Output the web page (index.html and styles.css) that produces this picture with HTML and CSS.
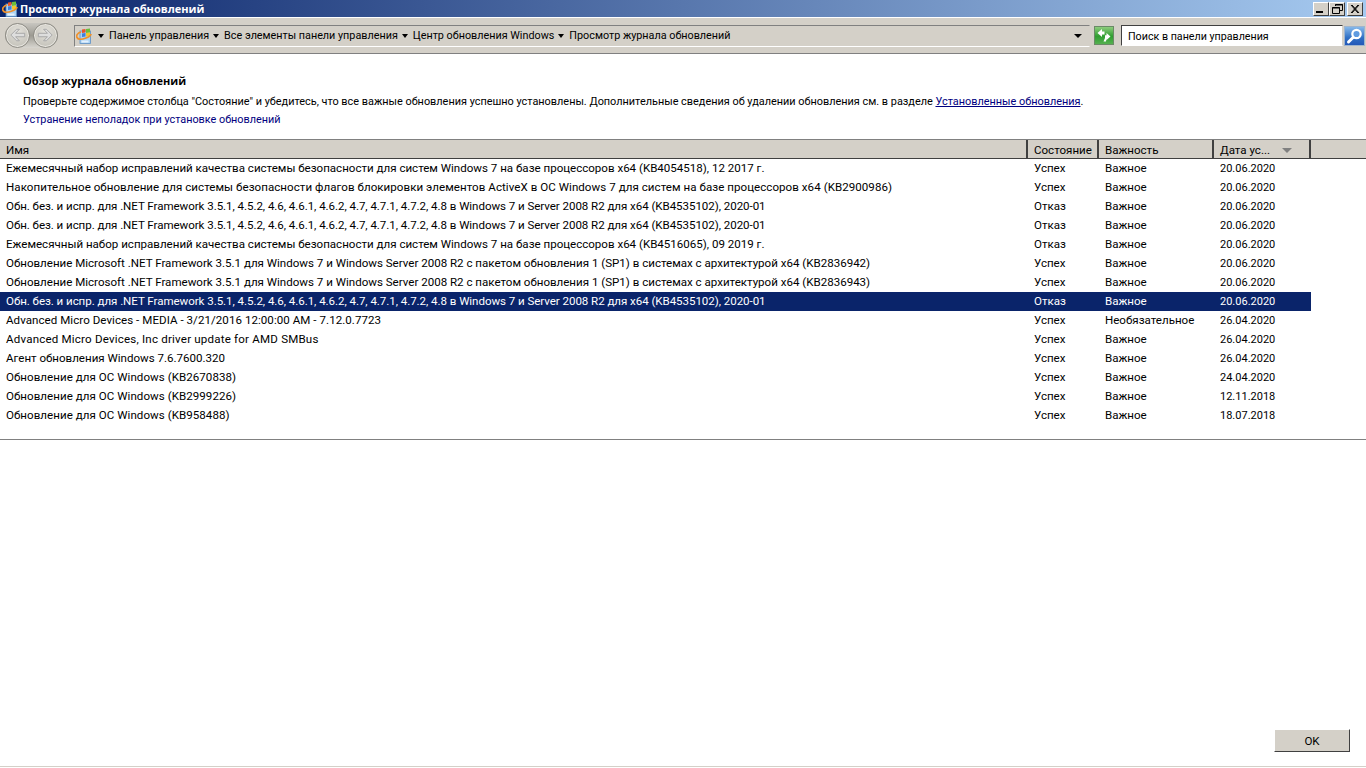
FILE: index.html
```html
<!DOCTYPE html>
<html lang="ru">
<head>
<meta charset="utf-8">
<title>Просмотр журнала обновлений</title>
<link rel="stylesheet" href="styles.css">
</head>
<body>
<div class="window">
  <header class="titlebar">
    <svg class="cp-icon" viewBox="0 0 16 16"><use href="#cp"/></svg>
    <span class="title-text">Просмотр журнала обновлений</span>
    <div class="win-buttons">
      <button class="win-btn"><svg viewBox="0 0 14 12"><rect x="2" y="8" width="7" height="2" fill="#000"/></svg></button>
      <button class="win-btn"><svg viewBox="0 0 14 12"><path d="M5.500 3V1.500h7v6H10M5 2h8M2.500 4.500h7v6h-7zM2 5h8" fill="none" stroke="#000"/></svg></button>
      <button class="win-btn close"><svg viewBox="0 0 14 12"><path d="M3 2l7 8M10 2l-7 8M4 2l7 8M11 2l-7 8" fill="none" stroke="#000"/></svg></button>
    </div>
  </header>

  <nav class="toolbar">
    <div class="nav-orbs">
      <span class="orb"><svg viewBox="0 0 24 24"><path d="M5 11.500l6-6h3l-4 4.200h9.500v3.600H10l4 4.200h-3z" fill="#dedede" stroke="#a6a6a6"/></svg></span>
      <span class="orb"><svg viewBox="0 0 24 24"><path d="M19 11.500l-6-6h-3l4 4.200H4.500v3.600H14l-4 4.200h3z" fill="#dedede" stroke="#a6a6a6"/></svg></span>
    </div>
    <div class="address">
      <svg class="cp-icon" viewBox="0 0 16 16"><use href="#cp"/></svg>
      <div class="crumbs">
        <span class="crumb">Панель управления</span>
        <span class="crumb">Все элементы панели управления</span>
        <span class="crumb">Центр обновления Windows</span>
        <span class="crumb">Просмотр журнала обновлений</span>
      </div>
      <span class="drop"></span>
    </div>
    <span class="refresh"><svg viewBox="0 0 18 17"><path d="M2.500 6L7 2v2.500h2.500v3H7V10z" fill="#fff"/><path d="M15.500 9.500L11.500 6v2.200H10V11l-1.500 3.500H11l.5-3V13z" fill="#fff"/></svg></span>
    <div class="search">
      <span class="search-text">Поиск в панели управления</span>
      <span class="search-btn"><svg viewBox="0 0 19 18"><circle cx="11.500" cy="7" r="4.200" fill="#5f9be0" stroke="#fff" stroke-width="2.200"/><path d="M8 10.500L3.500 15" stroke="#fff" stroke-width="3" stroke-linecap="round"/></svg></span>
    </div>
  </nav>

  <section class="intro">
    <h1 class="intro-title">Обзор журнала обновлений</h1>
    <p class="intro-line">Проверьте содержимое столбца "Состояние" и убедитесь, что все важные обновления успешно установлены. Дополнительные сведения об удалении обновления см. в разделе <a class="link underline">Установленные обновления</a>.</p>
    <p class="intro-line fix"><a class="link">Устранение неполадок при установке обновлений</a></p>
  </section>

  <section class="list">
    <div class="row head">
      <span class="hcell">Имя</span>
      <span class="hcell">Состояние</span>
      <span class="hcell">Важность</span>
      <span class="hcell">Дата ус... <i class="sort"></i></span>
      <span class="hcell last"></span>
    </div>
    <div class="row"><span class="cell">Ежемесячный набор исправлений качества системы безопасности для систем Windows 7 на базе процессоров x64 (KB4054518), 12 2017 г.</span><span class="cell">Успех</span><span class="cell">Важное</span><span class="cell date">20.06.2020</span></div>
    <div class="row"><span class="cell loose">Накопительное обновление для системы безопасности флагов блокировки элементов ActiveX в ОС Windows 7 для систем на базе процессоров x64 (KB2900986)</span><span class="cell">Успех</span><span class="cell">Важное</span><span class="cell date">20.06.2020</span></div>
    <div class="row"><span class="cell tight">Обн. без. и испр. для .NET Framework 3.5.1, 4.5.2, 4.6, 4.6.1, 4.6.2, 4.7, 4.7.1, 4.7.2, 4.8 в Windows 7 и Server 2008 R2 для x64 (KB4535102), 2020-01</span><span class="cell">Отказ</span><span class="cell">Важное</span><span class="cell date">20.06.2020</span></div>
    <div class="row"><span class="cell tight">Обн. без. и испр. для .NET Framework 3.5.1, 4.5.2, 4.6, 4.6.1, 4.6.2, 4.7, 4.7.1, 4.7.2, 4.8 в Windows 7 и Server 2008 R2 для x64 (KB4535102), 2020-01</span><span class="cell">Отказ</span><span class="cell">Важное</span><span class="cell date">20.06.2020</span></div>
    <div class="row"><span class="cell">Ежемесячный набор исправлений качества системы безопасности для систем Windows 7 на базе процессоров x64 (KB4516065), 09 2019 г.</span><span class="cell">Отказ</span><span class="cell">Важное</span><span class="cell date">20.06.2020</span></div>
    <div class="row"><span class="cell">Обновление Microsoft .NET Framework 3.5.1 для Windows 7 и Windows Server 2008 R2 с пакетом обновления 1 (SP1) в системах с архитектурой x64 (KB2836942)</span><span class="cell">Успех</span><span class="cell">Важное</span><span class="cell date">20.06.2020</span></div>
    <div class="row"><span class="cell">Обновление Microsoft .NET Framework 3.5.1 для Windows 7 и Windows Server 2008 R2 с пакетом обновления 1 (SP1) в системах с архитектурой x64 (KB2836943)</span><span class="cell">Успех</span><span class="cell">Важное</span><span class="cell date">20.06.2020</span></div>
    <div class="row selected"><span class="cell tight">Обн. без. и испр. для .NET Framework 3.5.1, 4.5.2, 4.6, 4.6.1, 4.6.2, 4.7, 4.7.1, 4.7.2, 4.8 в Windows 7 и Server 2008 R2 для x64 (KB4535102), 2020-01</span><span class="cell">Отказ</span><span class="cell">Важное</span><span class="cell date">20.06.2020</span></div>
    <div class="row"><span class="cell slight">Advanced Micro Devices - MEDIA - 3/21/2016 12:00:00 AM - 7.12.0.7723</span><span class="cell">Успех</span><span class="cell">Необязательное</span><span class="cell date">26.04.2020</span></div>
    <div class="row"><span class="cell wide">Advanced Micro Devices, Inc driver update for AMD SMBus</span><span class="cell">Успех</span><span class="cell">Важное</span><span class="cell date">26.04.2020</span></div>
    <div class="row"><span class="cell">Агент обновления Windows 7.6.7600.320</span><span class="cell">Успех</span><span class="cell">Важное</span><span class="cell date">26.04.2020</span></div>
    <div class="row"><span class="cell slight">Обновление для ОС Windows (KB2670838)</span><span class="cell">Успех</span><span class="cell">Важное</span><span class="cell date">24.04.2020</span></div>
    <div class="row"><span class="cell slight">Обновление для ОС Windows (KB2999226)</span><span class="cell">Успех</span><span class="cell">Важное</span><span class="cell date">12.11.2018</span></div>
    <div class="row"><span class="cell slight">Обновление для ОС Windows (KB958488)</span><span class="cell">Успех</span><span class="cell">Важное</span><span class="cell date">18.07.2018</span></div>
  </section>

  <footer class="footer">
    <button class="ok">OK</button>
  </footer>
</div>

<svg class="defs" width="0" height="0">
  <symbol id="cp" viewBox="0 0 16 16">
    <rect x="4" y="3" width="10.500" height="12.500" fill="#a9d2f4" stroke="#5d8fc4" stroke-width=".8"/>
    <path d="M5.500 12.500h7v2h-7z" fill="#e4f1fc"/>
    <path d="M6 1.500l3.500-.5v3.500L6 5z" fill="#e8552a"/>
    <path d="M10 1l4-.5v4l-4 .4z" fill="#6cbf3a"/>
    <path d="M6 5.500l3.500-.4v3.500L6 9z" fill="#3f7fd8"/>
    <path d="M10 5l4-.4v3.600l-4 .4z" fill="#f4c62c"/>
    <path d="M5 4C1.500 5 0 7.500 1 9.500s5 2 9 .5 5-3 5-4" fill="none" stroke="#f0902a" stroke-width="1.700"/>
  </symbol>
</svg>
</body>
</html>
```
FILE: styles.css
```css
* { box-sizing: border-box; }
html, body { margin: 0; height: 100%; }
body { background: #fff; color: #000; font: 11.55px/16px Roboto, "Open Sans", sans-serif; overflow: hidden; }
.window { height: 768px; display: flex; flex-direction: column; }
.defs { position: absolute; }

.titlebar { height: 17px; flex: none; display: flex; align-items: center; padding: 0 3px 0 2px; background: linear-gradient(90deg, #0a246a, #a6caf0); }
.title-text { margin-left: 2px; color: #fff; font: 700 11px/16px "Open Sans", sans-serif; }
.cp-icon { width: 16px; height: 16px; flex: none; }
.win-buttons { margin-left: auto; display: flex; }
.win-btn { width: 16px; height: 14px; padding: 0; border: 1px solid; border-color: #fff #404040 #404040 #fff; background: #d4d0c8; display: block; }
.win-btn svg { display: block; width: 14px; height: 12px; }
.win-btn.close { margin-left: 2px; }

.toolbar { height: 37px; flex: none; display: flex; align-items: center; padding: 0 0 0 5px; background: #d4d0c8; border-top: 1px solid #fff; border-bottom: 1px solid #808080; font-size: 10.8px; }
.nav-orbs { display: flex; gap: 3px; border-radius: 13px; background: linear-gradient(#c8c6c0, #9c9a92 50%, #d8d6d0); }
.orb { width: 25px; height: 25px; border-radius: 50%; background: radial-gradient(circle at 50% 35%, #e4e2dc, #c8c6be 70%, #b4b2aa); border: 1px solid #8e8c85; box-shadow: inset 0 0 0 1px #e8e6e0; display: block; }
.orb svg { display: block; width: 23px; height: 23px; }
.address { margin-left: 16px; width: 1016px; height: 22px; display: flex; align-items: center; border: 1px solid; border-color: #808080 #d4d0c8 #fff #808080; padding-left: 1px; }
.crumbs { display: flex; margin-left: 6px; padding-top: 1px; }
.crumb { display: flex; align-items: center; white-space: nowrap; margin-right: 4px; }
.crumb::before { content: ""; margin: 0 5px 0 0; border: 3px solid transparent; border-top: 4px solid #000; border-bottom: 0; }
.drop { margin-left: auto; margin-right: 7px; border: 4px solid transparent; border-top: 4px solid #000; border-bottom: 0; }
.refresh { width: 20px; height: 19px; flex: none; margin-left: 4px; background: linear-gradient(#8ccc7c, #2f9e30 55%, #55b050); border: 1px solid #6a8a66; display: block; }
.refresh svg { display: block; width: 18px; height: 17px; }
.search { margin-left: 7px; display: flex; flex: 1; align-items: center; height: 21px; font-size: 10.7px; }
.search-text { flex: 1; height: 21px; padding: 3px 6px 0; background: #fff; border: 1px solid; border-color: #404040 #d4d0c8 #fff #404040; white-space: nowrap; }
.search-btn { width: 21px; height: 20px; flex: none; margin: 0 1px; background: linear-gradient(#86b8ea, #2f6fc4 60%, #2458b8); border: 1px solid #9fb4cc; display: block; }
.search-btn svg { display: block; width: 19px; height: 18px; }

.intro { height: 85px; flex: none; padding: 18px 0 0 23px; font-size: 10.9px; }
.intro-title { margin: 0 0 4px; font: 700 11px/18px "Open Sans", sans-serif; }
.intro-line { margin: 0 0 2px; white-space: nowrap; }
.intro-line.fix { font-size: 10.85px; }
.link { color: #000080; }
.underline { text-decoration: underline; }

.list { height: 301px; flex: none; border-top: 1px solid #808080; border-bottom: 1px solid #808080; }
.row { display: grid; grid-template-columns: 1028px 71px 115px 97px; height: 19px; padding-top: 1px; align-items: baseline; width: 1311px; }
.row.head { width: auto; padding-top: 0; align-items: center; grid-template-columns: 1028px 71px 115px 97px 1fr; height: 19px; background: #d4d0c8; border-bottom: 1px solid #404040; }
.hcell { height: 18px; padding: 2px 0 0 6px; border-right: 2px solid #404040; white-space: nowrap; display: flex; align-items: center; }
.hcell.last { border-right: 0; }
.sort { margin-left: 12px; border: 5px solid transparent; border-top: 5px solid #808080; border-bottom: 0; }
.cell { padding-left: 6px; white-space: nowrap; overflow: hidden; }
.date { font-size: 11px; }
.tight { letter-spacing: -.05px; }
.slight { letter-spacing: .05px; }
.loose { letter-spacing: .055px; }
.wide { letter-spacing: .2px; }
.selected { background: #0a246a; color: #fff; }

.footer { flex: 1; display: flex; justify-content: flex-end; padding: 0 16px 14px 0; align-items: flex-end; border-bottom: 1px solid #d4d0c8; margin-bottom: 1px; }
.ok { width: 76px; height: 23px; padding: 0; font: inherit; background: #d4d0c8; border: 1px solid; border-color: #fff #404040 #404040 #fff; color: #000; }
```
